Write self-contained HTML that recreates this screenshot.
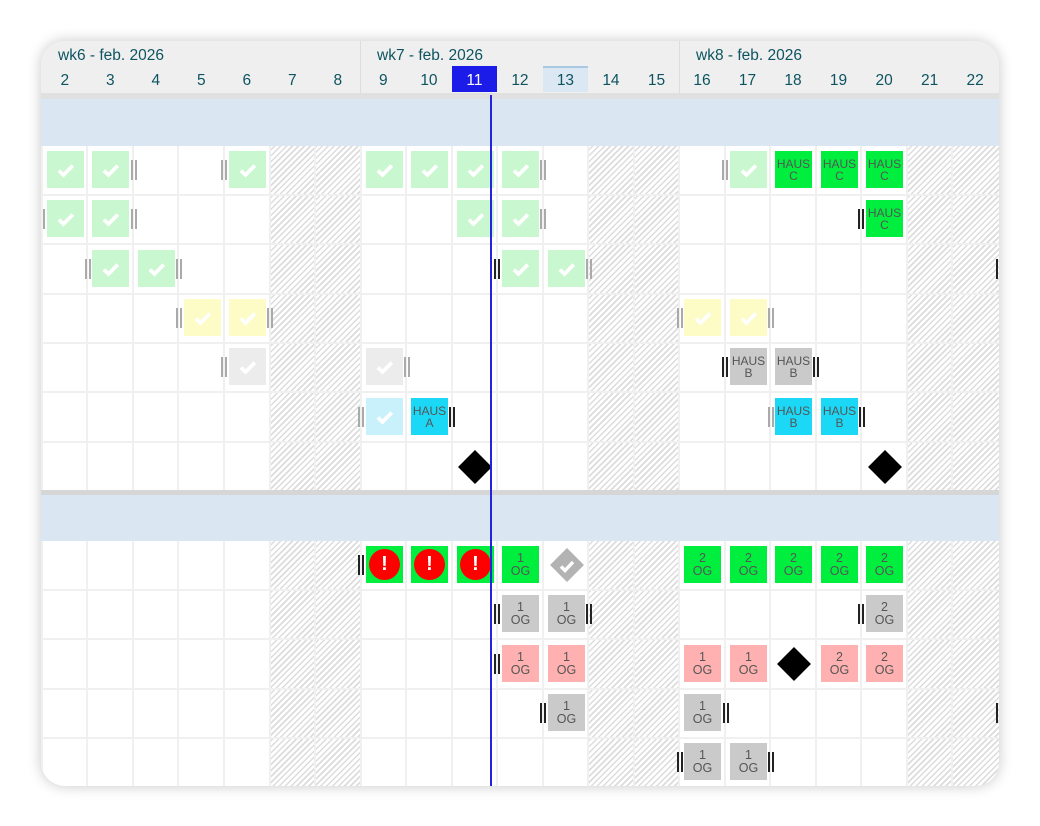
<!DOCTYPE html>
<html><head><meta charset="utf-8"><style>
*{margin:0;padding:0;box-sizing:border-box}
body{width:1040px;height:826px;background:#fff;overflow:hidden;font-family:"Liberation Sans",sans-serif}
#card{position:absolute;left:41px;top:41px;width:958px;height:745px;border-radius:24px;overflow:hidden;background:#fff;box-shadow:0 0 14px rgba(0,0,0,.22)}
#in{position:absolute;left:-41px;top:-41px;width:1040px;height:826px}
.a{position:absolute}
.hat{position:absolute;background:repeating-linear-gradient(135deg,#fff 0 2.6px,#dcdcdc 2.6px 4.2px)}
.vl{position:absolute;width:2px;background:#f0f0f0}
.hl{position:absolute;height:2px;background:#f0f0f0;left:41px;width:958px}
.wk{position:absolute;top:47px;font-size:15.5px;color:#0d5460}
.d{position:absolute;top:72px;width:45.5px;text-align:center;font-size:15.5px;color:#0d5460}
.b{position:absolute;width:37px;height:37px;display:flex;flex-direction:column;align-items:center;justify-content:center;font-size:12px;line-height:12px;color:#555;text-align:center}
.b svg{display:block}
.lg{background:#c9f7cf}.bg{background:#00ef3e}.yl{background:#fdfcc6}.gl{background:#ececec}.gr{background:#cacaca}.lc{background:#c8f1fb}.cy{background:#1cd8f7}.pk{background:#ffb1b1}
.og{font-size:12.5px;line-height:12.5px;color:#555}
.h{position:absolute;width:6px;height:20px;border-left:2px solid #aaa;border-right:2px solid #aaa}
.k{border-color:#222}
.dia{position:absolute;width:24px;height:24px;background:#000;transform:rotate(45deg)}
.ex{width:31px;height:31px;border-radius:50%;background:#f00;color:#fff;font-weight:bold;font-size:20px;line-height:31px;text-align:center}
</style></head><body>
<div id="card"><div id="in">
<div class="a" style="left:41px;top:41px;width:958px;height:54px;background:#efefef"></div>
<div class="a" style="left:360px;top:41px;width:1px;height:54px;background:#ddd"></div>
<div class="a" style="left:679px;top:41px;width:1px;height:54px;background:#ddd"></div>
<div class="a" style="left:41px;top:93px;width:958px;height:6px;background:#e0e0e0"></div>
<div class="wk" style="left:58px">wk6 - feb. 2026</div>
<div class="wk" style="left:377px">wk7 - feb. 2026</div>
<div class="wk" style="left:696px">wk8 - feb. 2026</div>
<div class="a" style="left:452px;top:66px;width:45px;height:26px;background:#1c1ce8"></div>
<div class="a" style="left:543px;top:66px;width:45px;height:26px;background:#dbe8f4;border-top:2px solid #a9c8e2"></div>
<div class="d" style="left:42px">2</div><div class="d" style="left:87.5px">3</div><div class="d" style="left:133px">4</div><div class="d" style="left:178.6px">5</div><div class="d" style="left:224.1px">6</div><div class="d" style="left:269.6px">7</div><div class="d" style="left:315.1px">8</div>
<div class="d" style="left:360.6px">9</div><div class="d" style="left:406.2px">10</div><div class="d" style="left:451.7px;color:#fff">11</div><div class="d" style="left:497.2px">12</div><div class="d" style="left:542.7px">13</div><div class="d" style="left:588.2px">14</div><div class="d" style="left:633.8px">15</div>
<div class="d" style="left:679.3px">16</div><div class="d" style="left:724.8px">17</div><div class="d" style="left:770.3px">18</div><div class="d" style="left:815.8px">19</div><div class="d" style="left:861.4px">20</div><div class="d" style="left:906.9px">21</div><div class="d" style="left:952.4px">22</div>

<div class="hat" style="left:270px;top:146px;width:91px;height:345px"></div>
<div class="hat" style="left:588px;top:146px;width:91px;height:345px"></div>
<div class="hat" style="left:907px;top:146px;width:92px;height:345px"></div>
<div class="hat" style="left:270px;top:541px;width:91px;height:245px"></div>
<div class="hat" style="left:588px;top:541px;width:91px;height:245px"></div>
<div class="hat" style="left:907px;top:541px;width:92px;height:245px"></div>

<div class="vl" style="left:86px;top:146px;height:640px"></div><div class="vl" style="left:132px;top:146px;height:640px"></div><div class="vl" style="left:177px;top:146px;height:640px"></div><div class="vl" style="left:223px;top:146px;height:640px"></div><div class="vl" style="left:269px;top:146px;height:640px"></div><div class="vl" style="left:314px;top:146px;height:640px"></div><div class="vl" style="left:360px;top:146px;height:640px"></div><div class="vl" style="left:405px;top:146px;height:640px"></div><div class="vl" style="left:451px;top:146px;height:640px"></div><div class="vl" style="left:496px;top:146px;height:640px"></div><div class="vl" style="left:542px;top:146px;height:640px"></div><div class="vl" style="left:587px;top:146px;height:640px"></div><div class="vl" style="left:633px;top:146px;height:640px"></div><div class="vl" style="left:678px;top:146px;height:640px"></div><div class="vl" style="left:724px;top:146px;height:640px"></div><div class="vl" style="left:769px;top:146px;height:640px"></div><div class="vl" style="left:815px;top:146px;height:640px"></div><div class="vl" style="left:860px;top:146px;height:640px"></div><div class="vl" style="left:906px;top:146px;height:640px"></div><div class="vl" style="left:951px;top:146px;height:640px"></div>
<div class="vl" style="left:41px;top:146px;height:640px"></div>
<div class="hl" style="top:194px"></div><div class="hl" style="top:243px"></div><div class="hl" style="top:293px"></div><div class="hl" style="top:342px"></div><div class="hl" style="top:391px"></div><div class="hl" style="top:441px"></div>
<div class="hl" style="top:589px"></div><div class="hl" style="top:638px"></div><div class="hl" style="top:688px"></div><div class="hl" style="top:737px"></div>

<div class="a" style="left:41px;top:99px;width:958px;height:47px;background:#dae7f2"></div>
<div class="a" style="left:41px;top:490px;width:958px;height:5px;background:#d6d6d6"></div>
<div class="a" style="left:41px;top:495px;width:958px;height:46px;background:#dae7f2"></div>

<!-- row 0 -->
<div class="b lg" style="left:47px;top:151px"><svg width="22" height="22" viewBox="0 0 20 20"><path d="M3.5 10.5l4.2 4 8.5-8.5" stroke="#fff" stroke-width="3.4" fill="none"/></svg></div>
<div class="b lg" style="left:92px;top:151px"><svg width="22" height="22" viewBox="0 0 20 20"><path d="M3.5 10.5l4.2 4 8.5-8.5" stroke="#fff" stroke-width="3.4" fill="none"/></svg></div>
<div class="h" style="left:131px;top:160px"></div>
<div class="h" style="left:221px;top:160px"></div>
<div class="b lg" style="left:229px;top:151px"><svg width="22" height="22" viewBox="0 0 20 20"><path d="M3.5 10.5l4.2 4 8.5-8.5" stroke="#fff" stroke-width="3.4" fill="none"/></svg></div>
<div class="b lg" style="left:366px;top:151px"><svg width="22" height="22" viewBox="0 0 20 20"><path d="M3.5 10.5l4.2 4 8.5-8.5" stroke="#fff" stroke-width="3.4" fill="none"/></svg></div>
<div class="b lg" style="left:411px;top:151px"><svg width="22" height="22" viewBox="0 0 20 20"><path d="M3.5 10.5l4.2 4 8.5-8.5" stroke="#fff" stroke-width="3.4" fill="none"/></svg></div>
<div class="b lg" style="left:457px;top:151px"><svg width="22" height="22" viewBox="0 0 20 20"><path d="M3.5 10.5l4.2 4 8.5-8.5" stroke="#fff" stroke-width="3.4" fill="none"/></svg></div>
<div class="b lg" style="left:502px;top:151px"><svg width="22" height="22" viewBox="0 0 20 20"><path d="M3.5 10.5l4.2 4 8.5-8.5" stroke="#fff" stroke-width="3.4" fill="none"/></svg></div>
<div class="h" style="left:540px;top:160px"></div>
<div class="h" style="left:722px;top:160px"></div>
<div class="b lg" style="left:730px;top:151px"><svg width="22" height="22" viewBox="0 0 20 20"><path d="M3.5 10.5l4.2 4 8.5-8.5" stroke="#fff" stroke-width="3.4" fill="none"/></svg></div>
<div class="b bg" style="left:775px;top:151px">HAUS<br>C</div>
<div class="b bg" style="left:821px;top:151px">HAUS<br>C</div>
<div class="b bg" style="left:866px;top:151px">HAUS<br>C</div>

<!-- row 1 -->
<div class="h" style="left:39px;top:209px"></div>
<div class="b lg" style="left:47px;top:200px"><svg width="22" height="22" viewBox="0 0 20 20"><path d="M3.5 10.5l4.2 4 8.5-8.5" stroke="#fff" stroke-width="3.4" fill="none"/></svg></div>
<div class="b lg" style="left:92px;top:200px"><svg width="22" height="22" viewBox="0 0 20 20"><path d="M3.5 10.5l4.2 4 8.5-8.5" stroke="#fff" stroke-width="3.4" fill="none"/></svg></div>
<div class="h" style="left:131px;top:209px"></div>
<div class="b lg" style="left:457px;top:200px"><svg width="22" height="22" viewBox="0 0 20 20"><path d="M3.5 10.5l4.2 4 8.5-8.5" stroke="#fff" stroke-width="3.4" fill="none"/></svg></div>
<div class="b lg" style="left:502px;top:200px"><svg width="22" height="22" viewBox="0 0 20 20"><path d="M3.5 10.5l4.2 4 8.5-8.5" stroke="#fff" stroke-width="3.4" fill="none"/></svg></div>
<div class="h" style="left:540px;top:209px"></div>
<div class="h k" style="left:858px;top:209px"></div>
<div class="b bg" style="left:866px;top:200px">HAUS<br>C</div>

<!-- row 2 -->
<div class="h" style="left:85px;top:259px"></div>
<div class="b lg" style="left:92px;top:250px"><svg width="22" height="22" viewBox="0 0 20 20"><path d="M3.5 10.5l4.2 4 8.5-8.5" stroke="#fff" stroke-width="3.4" fill="none"/></svg></div>
<div class="b lg" style="left:138px;top:250px"><svg width="22" height="22" viewBox="0 0 20 20"><path d="M3.5 10.5l4.2 4 8.5-8.5" stroke="#fff" stroke-width="3.4" fill="none"/></svg></div>
<div class="h" style="left:176px;top:259px"></div>
<div class="h k" style="left:494px;top:259px"></div>
<div class="b lg" style="left:502px;top:250px"><svg width="22" height="22" viewBox="0 0 20 20"><path d="M3.5 10.5l4.2 4 8.5-8.5" stroke="#fff" stroke-width="3.4" fill="none"/></svg></div>
<div class="b lg" style="left:548px;top:250px"><svg width="22" height="22" viewBox="0 0 20 20"><path d="M3.5 10.5l4.2 4 8.5-8.5" stroke="#fff" stroke-width="3.4" fill="none"/></svg></div>
<div class="h" style="left:586px;top:259px"></div>
<div class="a" style="left:996px;top:259px;width:2px;height:20px;background:#222"></div>

<!-- row 3 -->
<div class="h" style="left:176px;top:308px"></div>
<div class="b yl" style="left:184px;top:299px"><svg width="22" height="22" viewBox="0 0 20 20"><path d="M3.5 10.5l4.2 4 8.5-8.5" stroke="#fff" stroke-width="3.4" fill="none"/></svg></div>
<div class="b yl" style="left:229px;top:299px"><svg width="22" height="22" viewBox="0 0 20 20"><path d="M3.5 10.5l4.2 4 8.5-8.5" stroke="#fff" stroke-width="3.4" fill="none"/></svg></div>
<div class="h" style="left:267px;top:308px"></div>
<div class="h" style="left:677px;top:308px"></div>
<div class="b yl" style="left:684px;top:299px"><svg width="22" height="22" viewBox="0 0 20 20"><path d="M3.5 10.5l4.2 4 8.5-8.5" stroke="#fff" stroke-width="3.4" fill="none"/></svg></div>
<div class="b yl" style="left:730px;top:299px"><svg width="22" height="22" viewBox="0 0 20 20"><path d="M3.5 10.5l4.2 4 8.5-8.5" stroke="#fff" stroke-width="3.4" fill="none"/></svg></div>
<div class="h" style="left:768px;top:308px"></div>

<!-- row 4 -->
<div class="h" style="left:221px;top:357px"></div>
<div class="b gl" style="left:229px;top:348px"><svg width="22" height="22" viewBox="0 0 20 20"><path d="M3.5 10.5l4.2 4 8.5-8.5" stroke="#fff" stroke-width="3.4" fill="none"/></svg></div>
<div class="b gl" style="left:366px;top:348px"><svg width="22" height="22" viewBox="0 0 20 20"><path d="M3.5 10.5l4.2 4 8.5-8.5" stroke="#fff" stroke-width="3.4" fill="none"/></svg></div>
<div class="h" style="left:404px;top:357px"></div>
<div class="h k" style="left:722px;top:357px"></div>
<div class="b gr" style="left:730px;top:348px">HAUS<br>B</div>
<div class="b gr" style="left:775px;top:348px">HAUS<br>B</div>
<div class="h k" style="left:813px;top:357px"></div>

<!-- row 5 -->
<div class="h" style="left:358px;top:407px"></div>
<div class="b lc" style="left:366px;top:398px"><svg width="22" height="22" viewBox="0 0 20 20"><path d="M3.5 10.5l4.2 4 8.5-8.5" stroke="#fff" stroke-width="3.4" fill="none"/></svg></div>
<div class="b cy" style="left:411px;top:398px">HAUS<br>A</div>
<div class="h k" style="left:449px;top:407px"></div>
<div class="h" style="left:768px;top:407px"></div>
<div class="b cy" style="left:775px;top:398px">HAUS<br>B</div>
<div class="b cy" style="left:821px;top:398px">HAUS<br>B</div>
<div class="h k" style="left:859px;top:407px"></div>

<div class="dia" style="left:463px;top:455px"></div>
<div class="dia" style="left:873px;top:455px"></div>

<!-- bottom row 0 -->
<div class="h k" style="left:358px;top:555px"></div>
<div class="b bg" style="left:366px;top:546px"><div class="ex">!</div></div>
<div class="b bg" style="left:411px;top:546px"><div class="ex">!</div></div>
<div class="b bg" style="left:457px;top:546px"><div class="ex">!</div></div>
<div class="b bg og" style="left:502px;top:546px">1<br>OG</div>
<div class="a" style="left:555px;top:553px;width:24px;height:24px;background:#b3b3b3;transform:rotate(45deg)"></div>
<div class="a" style="left:557px;top:556px"><svg width="20" height="20" viewBox="0 0 20 20"><path d="M4 10.5l4 4 8-8.5" stroke="#fff" stroke-width="3.4" fill="none"/></svg></div>
<div class="b bg og" style="left:684px;top:546px">2<br>OG</div>
<div class="b bg og" style="left:730px;top:546px">2<br>OG</div>
<div class="b bg og" style="left:775px;top:546px">2<br>OG</div>
<div class="b bg og" style="left:821px;top:546px">2<br>OG</div>
<div class="b bg og" style="left:866px;top:546px">2<br>OG</div>

<!-- bottom row 1 -->
<div class="h k" style="left:494px;top:604px"></div>
<div class="b gr og" style="left:502px;top:595px">1<br>OG</div>
<div class="b gr og" style="left:548px;top:595px">1<br>OG</div>
<div class="h k" style="left:586px;top:604px"></div>
<div class="h k" style="left:858px;top:604px"></div>
<div class="b gr og" style="left:866px;top:595px">2<br>OG</div>

<!-- bottom row 2 -->
<div class="h k" style="left:494px;top:654px"></div>
<div class="b pk og" style="left:502px;top:645px">1<br>OG</div>
<div class="b pk og" style="left:548px;top:645px">1<br>OG</div>
<div class="b pk og" style="left:684px;top:645px">1<br>OG</div>
<div class="b pk og" style="left:730px;top:645px">1<br>OG</div>
<div class="dia" style="left:782px;top:652px"></div>
<div class="b pk og" style="left:821px;top:645px">2<br>OG</div>
<div class="b pk og" style="left:866px;top:645px">2<br>OG</div>

<!-- bottom row 3 -->
<div class="h k" style="left:540px;top:703px"></div>
<div class="b gr og" style="left:548px;top:694px">1<br>OG</div>
<div class="b gr og" style="left:684px;top:694px">1<br>OG</div>
<div class="h k" style="left:723px;top:703px"></div>
<div class="a" style="left:996px;top:703px;width:2px;height:20px;background:#222"></div>

<!-- bottom row 4 -->
<div class="h k" style="left:677px;top:752px"></div>
<div class="b gr og" style="left:684px;top:743px">1<br>OG</div>
<div class="b gr og" style="left:730px;top:743px">1<br>OG</div>
<div class="h k" style="left:768px;top:752px"></div>

<div class="a" style="left:490px;top:95px;width:2px;height:700px;background:#2323e0"></div>
</div></div>
</body></html>
